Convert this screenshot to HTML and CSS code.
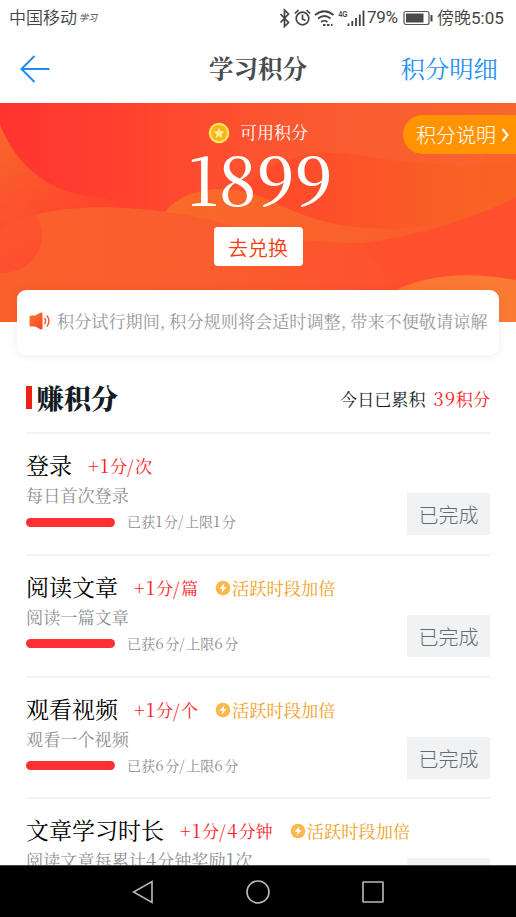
FILE: index.html
```html
<!DOCTYPE html>
<html lang="zh-CN">
<head>
<meta charset="utf-8">
<title>学习积分</title>
<link rel="stylesheet" href="styles.css">
</head>
<body>
<div class="phone">
  <div class="status">
    <span class="carrier">中国移动</span><span class="brand">学习</span>
    <svg class="status-icons" width="94" height="24" viewBox="0 0 94 24" fill="none" stroke="#444" stroke-width="1.700">
      <path d="M2.500 8l8 8.500-4 4V4l4 4-8 8.500"/>
      <circle cx="24.500" cy="12.500" r="6.300"/><path d="M24.500 8.500V13l3 1.500M17 7.500L20.500 4M32 7.500L28.500 4"/>
      <path d="M37 9q9.500-7.500 18.500 0M40 12.500q6.500-5 12.500 0M43 16q3.500-2.500 6.500 0"/>
      <path d="M45 19h2.500M49 19h2.500M53 19h1.500" stroke-width="2.200"/>
      <path d="M70.500 17.500v2.500M74.300 15v5M78 12v8M81.800 8.500v11.500M85.500 4.500v15.500" stroke-width="1.800"/>
      <text x="60.500" y="11" class="net" textLength="9" lengthAdjust="spacingAndGlyphs">4G</text>
    </svg>
    <span class="pct">79%</span>
    <svg class="battery" width="30" height="16" viewBox="0 0 30 16"><rect x="1" y="1.500" width="25" height="13" rx="2" fill="none" stroke="#555" stroke-width="1.200"/><rect x="3" y="3.500" width="17.500" height="9" fill="#4a4a4a"/><path d="M28.500 5v6.500" stroke="#444" stroke-width="2"/></svg>
    <span class="time">傍晚</span><span class="clock">5:05</span>
  </div>
  <header class="nav">
    <svg width="30" height="28" viewBox="0 0 30 28" fill="none" stroke="#1c8cf5" stroke-width="2"><path d="M29.500 14H1.500M14.500 1L1.500 14l13 13"/></svg>
    <h1>学习积分</h1>
    <a class="detail">积分明细</a>
  </header>
  <section class="hero">
    <svg class="waves" width="516" height="219" viewBox="0 0 516 219" preserveAspectRatio="none">
      <defs>
        <linearGradient id="base" x1="0" y1="0" x2="1" y2="0"><stop offset="0" stop-color="#ff3430"/><stop offset=".25" stop-color="#ff422e"/><stop offset=".55" stop-color="#fb5730"/><stop offset="1" stop-color="#f9662e"/></linearGradient>
        <linearGradient id="left" gradientUnits="userSpaceOnUse" x1="0" y1="30" x2="60" y2="125"><stop offset="0" stop-color="#f8662c"/><stop offset="1" stop-color="#ff462d"/></linearGradient>
        <linearGradient id="ball" x1="0" y1="0" x2=".4" y2="1"><stop offset="0" stop-color="#fa5a2e"/><stop offset="1" stop-color="#ff482e"/></linearGradient>
        <linearGradient id="hill" x1="0" y1="0" x2="1" y2="0"><stop offset="0" stop-color="#fa602c"/><stop offset=".5" stop-color="#fa5d2e"/><stop offset="1" stop-color="#ff502d"/></linearGradient>
        <linearGradient id="band" x1="0" y1="0" x2="1" y2="0"><stop offset="0" stop-color="#ff4a2c"/><stop offset=".25" stop-color="#fd4d2b"/><stop offset=".6" stop-color="#fa5a26"/><stop offset="1" stop-color="#f86624"/></linearGradient>
        <linearGradient id="mid" x1="0" y1="0" x2="1" y2="0"><stop offset="0" stop-color="#f86b29"/><stop offset="1" stop-color="#fb592d"/></linearGradient>
        <linearGradient id="corner" x1="0" y1="0" x2="1" y2="0"><stop offset="0" stop-color="#fa7434"/><stop offset="1" stop-color="#fb7b34"/></linearGradient>
      </defs>
      <rect width="516" height="219" fill="url(#base)"/>
      <path d="M0 22C18 65 50 92 105 95L170 140H0z" fill="url(#left)"/>
      <path d="M240 88C265 60 300 48 340 50C385 54 430 68 516 59V219H240z" fill="url(#band)"/>
      <circle cx="508" cy="72" r="30" fill="#fa5e26" opacity=".35"/>
      <path d="M165 109C185 84 225 80 263 94C305 115 335 126 395 126C435 124 480 114 516 94V219H165z" fill="url(#mid)"/>
      <path d="M170 140C270 142 330 143 362 140C410 134 470 118 516 94V219H170z" fill="#ff502d"/>
      <path d="M0 125C50 98 130 100 207 116C255 129 290 140 360 140L420 219H0z" fill="url(#hill)"/>
      <circle cx="4" cy="132" r="38" fill="url(#ball)" opacity=".7"/>
      <path d="M380 195C425 169 470 169 516 177V219H350z" fill="url(#corner)"/>
    </svg>
    <a class="rules">积分说明<svg width="9" height="16" viewBox="0 0 9 16" fill="none" stroke="#fff" stroke-width="2"><path d="M1.500 2l5 6-5 6"/></svg></a>
    <div class="avail">
      <svg width="22" height="22" viewBox="0 0 22 22"><circle cx="11" cy="11" r="10.300" fill="#ffe45e"/><circle cx="11" cy="11" r="8" fill="#f7b51f"/><path d="M11 5.800l1.600 3.400 3.700.4-2.700 2.600.7 3.700-3.300-1.800-3.300 1.800.7-3.700-2.700-2.600 3.700-.4z" fill="#ffea9a"/></svg>
      <span>可用积分</span>
    </div>
    <div class="total">1899</div>
    <a class="exchange">去兑换</a>
  </section>
  <div class="notice">
    <svg width="22" height="18" viewBox="0 0 22 18"><defs><linearGradient id="horn" x1="0" y1="0" x2="1" y2="1"><stop offset="0" stop-color="#f97a2c"/><stop offset="1" stop-color="#fb432c"/></linearGradient></defs><path d="M2 3.500H6L11.500.8q2-.8 2 1v14.400q0 1.800-2 1L6 14.500H2Q.5 14.500.5 13V5Q.5 3.500 2 3.500z" fill="url(#horn)"/><path d="M15.500 6q2.200 3 0 6M17.800 3.500q4.300 5.500 0 11" fill="none" stroke="#fb5a30" stroke-width="1.500"/></svg>
    <span>积分试行期间, 积分规则将会适时调整, 带来不便敬请谅解</span>
  </div>
  <main class="tasks">
    <div class="heading"><h2>赚积分</h2><span class="today">今日已累积</span><span class="sum"><i>39</i>积分</span></div>
    <article class="task">
      <div class="info">
        <div class="name"><b>登录</b><span class="reward"><i>+1</i>分<i>/</i>次</span></div>
        <p>每日首次登录</p>
        <div class="progress"><span class="bar"></span><span class="count">已获<i>1</i>分<i>/</i>上限<i>1</i>分</span></div>
      </div>
      <span class="done">已完成</span>
    </article>
    <article class="task">
      <div class="info">
        <div class="name"><b>阅读文章</b><span class="reward"><i>+1</i>分<i>/</i>篇</span><svg class="bolt" width="16" height="16" viewBox="0 0 16 16"><circle cx="8" cy="8" r="7.300" fill="#fbb84d"/><path d="M9.500 3L4.500 8.700h3L6.500 13l5-6h-3z" fill="#fff"/></svg><span class="double">活跃时段加倍</span></div>
        <p>阅读一篇文章</p>
        <div class="progress"><span class="bar"></span><span class="count">已获<i>6</i>分<i>/</i>上限<i>6</i>分</span></div>
      </div>
      <span class="done">已完成</span>
    </article>
    <article class="task">
      <div class="info">
        <div class="name"><b>观看视频</b><span class="reward"><i>+1</i>分<i>/</i>个</span><svg class="bolt" width="16" height="16" viewBox="0 0 16 16"><circle cx="8" cy="8" r="7.300" fill="#fbb84d"/><path d="M9.500 3L4.500 8.700h3L6.500 13l5-6h-3z" fill="#fff"/></svg><span class="double">活跃时段加倍</span></div>
        <p>观看一个视频</p>
        <div class="progress"><span class="bar"></span><span class="count">已获<i>6</i>分<i>/</i>上限<i>6</i>分</span></div>
      </div>
      <span class="done">已完成</span>
    </article>
    <article class="task">
      <div class="info">
        <div class="name"><b>文章学习时长</b><span class="reward"><i>+1</i>分<i>/4</i>分钟</span><svg class="bolt" width="16" height="16" viewBox="0 0 16 16"><circle cx="8" cy="8" r="7.300" fill="#fbb84d"/><path d="M9.500 3L4.500 8.700h3L6.500 13l5-6h-3z" fill="#fff"/></svg><span class="double">活跃时段加倍</span></div>
        <p>阅读文章每累计<i>4</i>分钟奖励<i>1</i>次</p>
      </div>
      <span class="done">已完成</span>
    </article>
  </main>
  <footer class="keys">
    <svg width="22" height="24" viewBox="0 0 22 24"><path d="M20 1.500v21L1.500 12z"/></svg>
    <svg width="26" height="26" viewBox="0 0 26 26"><circle cx="13" cy="13" r="11"/></svg>
    <svg width="22" height="22" viewBox="0 0 22 22"><rect x="1" y="1" width="20" height="20" rx=".5"/></svg>
  </footer>
</div>
</body>
</html>
```
FILE: styles.css
```css
* { box-sizing: border-box; }
body { margin: 0; background: #fff; font-family: "Noto Serif CJK SC", "Liberation Serif", "Noto Sans CJK SC", serif; }
svg { display: block; flex: none; }
h1, h2, p { margin: 0; }
i { font-style: normal; font-family: "Noto Serif CJK SC", serif; font-size: 1.080em; letter-spacing: .8px; line-height: 1; }
.phone { width: 516px; height: 917px; overflow: hidden; display: flex; flex-direction: column; white-space: nowrap; }

.status { height: 35px; flex: none; display: flex; align-items: center; padding-left: 9px; color: #444; font: 17px/24px Roboto, "Noto Sans CJK SC", sans-serif; }
.carrier, .time { font-family: "Noto Sans CJK SC", sans-serif; font-weight: 350; position: relative; top: -1px; }
.brand { font: italic 9px/20px "Noto Sans CJK SC", sans-serif; margin-left: 2px; width: 20px; }
.status-icons { margin-left: 179px; }
.net { font: 700 9px "Liberation Sans", sans-serif; fill: #444; stroke: none; }
.pct { width: 33px; margin-left: -5px; letter-spacing: -.3px; position: relative; top: -1px; }
.battery { margin-left: 3px; }
.time { margin-left: 4px; }
.clock { font-size: 17px; }

.nav { height: 68px; flex: none; display: grid; grid-template-columns: 150px 1fr 150px; align-items: center; padding: 0 18px 0 18px; }
.nav svg { margin-left: 2px; }
.nav h1 { font-size: 24.500px; line-height: 34px; padding-bottom: 2px; color: #484b50; text-align: center; font-weight: 700; }
.detail { font-size: 24.400px; line-height: 34px; padding-bottom: 3px; color: #2590f5; text-align: right; }

.hero { height: 219px; flex: none; position: relative; display: flex; flex-direction: column; align-items: center; color: #fff; }
.waves { position: absolute; left: 0; top: 0; }
.rules { position: absolute; right: 0; top: 12px; width: 113px; height: 39px; border-radius: 20px 0 0 20px; background: #ff9400; font: 20px/40px "Noto Sans CJK SC", sans-serif; font-weight: 300; display: flex; align-items: center; gap: 5px; padding-left: 13px; }
.avail { position: relative; margin: 18px 0 0 0; height: 24px; display: flex; align-items: center; gap: 10px; font-size: 17px; }
.avail span { line-height: 24px; padding-bottom: 3px; }
.total { position: relative; margin-left: 4px; height: 82px; font-size: 66.500px; line-height: 65px; font-weight: 500; }
.exchange { position: relative; width: 89px; height: 39px; border-radius: 4px; background: #fff; color: #f73c0d; font: 20px/41px "Noto Sans CJK SC", sans-serif; font-weight: 350; text-align: center; }

.notice { position: relative; margin: -32px 17px 0; height: 65px; flex: none; background: #fff; border-radius: 9px; box-shadow: 0 1px 10px rgba(60, 60, 60, .09); display: flex; align-items: center; padding: 0 12px 4px; gap: 6px; color: #96999b; font-size: 17.150px; }
.notice span { word-spacing: -.5px; padding-bottom: 1px; }

.tasks { flex: 1; min-height: 0; overflow: hidden; padding: 0 26px; }
.heading { height: 77px; display: flex; align-items: center; padding-top: 9px; font-size: 17.100px; line-height: 26px; color: #17191d; }
.heading h2 { margin-right: auto; border-left: 6px solid #ed2015; padding-left: 5px; font-size: 27px; line-height: 23px; font-weight: 900; color: #131c25; position: relative; top: -1px; }
.today, .sum { padding-top: 1px; }
.sum { margin-left: 8px; color: #fd2024; }
.task { height: 121.800px; border-top: 2px solid #f2f3f4; display: flex; justify-content: space-between; }
.info { min-width: 0; padding-top: 15px; }
.name { height: 32px; line-height: 32px; display: flex; align-items: center; }
.name b { font-size: 23px; font-weight: 400; color: #000; }
.reward { margin: 2px 0 0 16px; font-size: 17.100px; color: #fb2026; }
.reward i { letter-spacing: 1.300px; }
.bolt { margin: 2px 0 0 17px; }
.double { margin-top: 2px; margin-left: 1px; font-size: 17.250px; color: #f2a01d; }
.task p { height: 26px; line-height: 27px; font-size: 17.150px; color: #8e8e8e; }
.progress { height: 28px; line-height: 28px; display: flex; align-items: center; gap: 12px; font-size: 14.100px; color: #8e8e8e; }
.progress i { letter-spacing: 1.500px; }
.bar { width: 89px; height: 9px; border-radius: 5px; background: #ff3033; margin-top: 2px; }
.done { flex: none; margin-top: 59px; width: 83px; height: 42px; background: #f1f2f4; color: #636a71; font: 20px/44px "Noto Sans CJK SC", sans-serif; font-weight: 300; text-align: center; }

.keys { height: 52px; flex: none; background: #000; border-top: 1px solid #444; display: flex; align-items: center; justify-content: center; gap: 91px; }
.keys svg { fill: none; stroke: #bbb; stroke-width: 1.600; }
```
